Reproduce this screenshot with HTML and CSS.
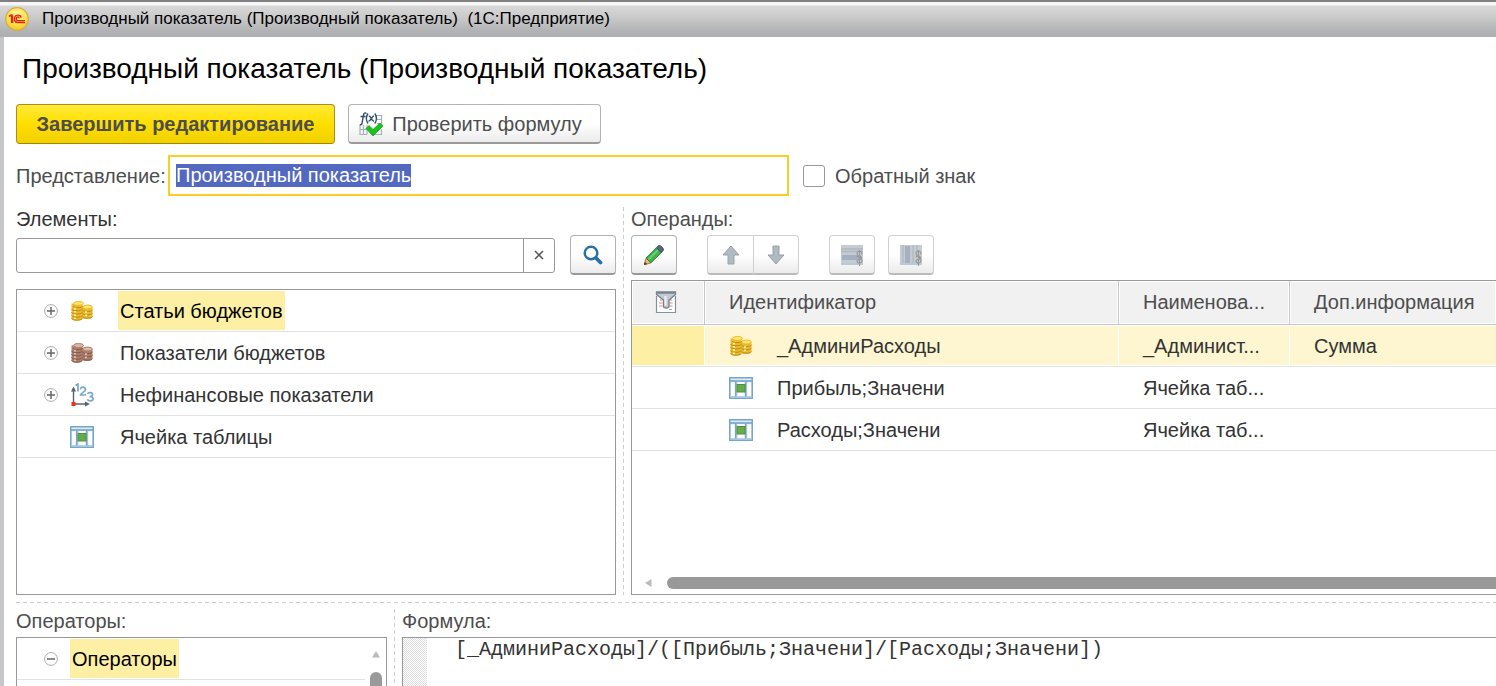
FILE: index.html
```html
<!DOCTYPE html>
<html lang="ru">
<head>
<meta charset="utf-8">
<title>Производный показатель (1С:Предприятие)</title>
<link rel="stylesheet" href="styles.css">
</head>
<body>
<svg class="defs" width="0" height="0" aria-hidden="true">
  <defs>
    <symbol id="coins" viewBox="0 0 24 24">
      <path class="coin-side" d="M1.500 4.500v14.500c0 3.500 11 3.500 11 0v-14.500z"/>
      <path class="coin-side" d="M12 8v10.500c1 2.500 10.500 2 10.500-1V8z"/>
      <ellipse class="coin-top" cx="8.500" cy="4.500" rx="5" ry="2"/>
      <ellipse class="coin-top" cx="17.500" cy="8" rx="4.800" ry="2"/>
      <path class="coin-line" d="M3 7c1 2.200 9 2.200 10 0M1.500 10c1 2.400 9.500 2.400 11 0M1.500 13.200c1 2.400 9.500 2.400 11 0M1.500 16.500c1 2.400 9.500 2.400 11 0M1.500 19.400c1 2.400 9.500 2.400 11 0M12.500 11c1 2 9 2 10 0M12.500 14.200c1 2 9 2 10 0M12.500 17.600c1 2 9 2 10 0"/>
      <path class="coin-shine" d="M5 8.800v1.600M5 12v1.600M5 15.300v1.600M5 18.500v1.400M16 12.300v1.600M16 15.600v1.600"/>
    </symbol>
    <symbol id="cell" viewBox="0 0 24 22">
      <rect x=".75" y=".75" width="22.500" height="20.500" fill="#dcecf8" stroke="#78a6c8" stroke-width="1.500"/>
      <path d="M1 4h22" stroke="#6d9fc4" stroke-width="1.500"/>
      <rect x="2" y="5.500" width="3.500" height="14" fill="#fff"/>
      <rect x="18.500" y="5.500" width="3.500" height="14" fill="#fff"/>
      <rect x="9" y="5" width="6" height="15" fill="#fff"/>
      <path d="M6.800 4.500V20M16.800 4.500V20" stroke="#78a6c8" stroke-width="1.600"/>
      <path d="M1.500 20h21" stroke="#a3c5dc" stroke-width="1.500"/>
      <rect x="8" y="7.500" width="8" height="7.500" fill="#67ad45" stroke="#4e9046"/>
    </symbol>
    <symbol id="plus" viewBox="0 0 14 14">
      <circle cx="7" cy="7" r="6.400" fill="#fff" stroke="#aaa"/>
      <path d="M3 7h8M7 3v8" stroke="#666" stroke-width="1.500"/>
    </symbol>
    <symbol id="minus" viewBox="0 0 14 14">
      <circle cx="7" cy="7" r="6.400" fill="#fff" stroke="#aaa"/>
      <path d="M3 7h8" stroke="#666" stroke-width="1.500"/>
    </symbol>
    <symbol id="clip" viewBox="0 0 8 18">
      <path d="M6.500 5.500C6.500 1 1.500 1 1.500 4.500S6.500 8 6.500 11.500 1.500 14.500 1.500 12M2 8.500C1 6 6 6 6 9S1.500 9 1.500 12.500M4 1v16" fill="none" stroke="#999" stroke-width="1.100"/>
    </symbol>
  </defs>
</svg>

<header class="titlebar">
  <svg class="logo" viewBox="0 0 24 24" aria-hidden="true">
    <defs>
      <radialGradient id="sun" cx=".5" cy=".3" r=".7"><stop offset="0" stop-color="#fff6a0"/><stop offset=".6" stop-color="#ffe24a"/><stop offset="1" stop-color="#f6c61d"/></radialGradient>
    </defs>
    <circle cx="12" cy="12" r="11.300" fill="url(#sun)" stroke="#d0ae4c" stroke-width="1.200"/>
    <path d="M4 9.500l2.200-1.500h.6v8M7.500 8.500V16" fill="none" stroke="#e2231a" stroke-width="1.700"/>
    <path d="M16 10.800c0-3.800-6.500-3.800-6.500 1.200 0 2.200 1.500 3.500 3.200 3.500H20M14.300 11.300c-.2-2-3-1.700-3 .6 0 1.100.7 1.700 1.600 1.700H20" fill="none" stroke="#e2231a" stroke-width="1.400"/>
  </svg>
  <span>Производный показатель (Производный показатель)&nbsp; (1С:Предприятие)</span>
</header>

<main class="window">
  <h1>Производный показатель (Производный показатель)</h1>

  <div class="commands">
    <button class="btn primary" type="button">Завершить редактирование</button>
    <button class="btn check" type="button">
      <svg class="icon-check" viewBox="0 0 24 24" aria-hidden="true">
        <path d="M17 3.500h5.500v8.500M18 7.500h4.500M1 13v9.500h7M1 17.500h7M4.500 13v9.500M8 13v9.500M13 22.500h9.500v-5M18 11.500h4" fill="none" stroke="#a5b1ba" stroke-width="1.200"/>
        <path d="M7.500 1.300C5.500.3 4.800 1.500 4.400 3.500L3 11.500c-.3 1.300-1 1.500-2.200 1M1.500 4.500h5M9 1.500c-2 3-2 7 0 10M15.800 1.500c2 3 2 7 0 10M9.800 4c2.700 0 2.300 5.500 5.200 5M15 4c-2.500 0-3 5.500-5.500 5" fill="none" stroke="#2e536b" stroke-width="1.400"/>
        <path d="M7 16.500l3-3 4 4 7-6.500 3 3-10 10z" fill="#19c319" stroke="#159b1b" stroke-width=".7"/>
      </svg>
      <span>Проверить формулу</span>
    </button>
  </div>

  <div class="props">
    <label class="caption-label" for="caption">Представление:</label>
    <input class="caption" id="caption" type="text" value="Производный показатель">
    <input class="tick" id="inverse" type="checkbox">
    <label for="inverse">Обратный знак</label>
  </div>

  <div class="upper">
    <section class="pane">
      <label class="dark" for="search">Элементы:</label>
      <div class="search-row">
        <div class="search-box">
          <input id="search" type="text">
          <button type="button" aria-label="Очистить"><svg viewBox="0 0 10 10" aria-hidden="true"><path d="M1 1l8 8M9 1L1 9" stroke="#555" stroke-width="1.500"/></svg></button>
        </div>
        <button class="btn square" type="button" aria-label="Найти">
          <svg class="icon-find" viewBox="0 0 20 20" aria-hidden="true"><circle cx="8" cy="8" r="6.300" fill="none" stroke="#2672a8" stroke-width="2.400"/><path d="M13 13l4.500 4.500" stroke="#2672a8" stroke-width="3.800" stroke-linecap="round"/></svg>
        </button>
      </div>
      <ul class="tree box">
        <li><svg class="expander"><use href="#plus"/></svg><svg class="icon gold"><use href="#coins"/></svg><span class="current">Статьи бюджетов</span></li>
        <li><svg class="expander"><use href="#plus"/></svg><svg class="icon bronze"><use href="#coins"/></svg><span>Показатели бюджетов</span></li>
        <li><svg class="expander"><use href="#plus"/></svg>
          <svg class="icon" viewBox="0 0 24 24" aria-hidden="true">
            <path d="M3.500 21V5M3.500 21h13" stroke="#58646b" stroke-width="1.400"/>
            <path d="M1 8.500L3.500 3.500l2.500 5zM15 18.500l5 2.500-5 2.500z" fill="#58646b"/>
            <rect x="1.500" y="19" width="4" height="4" fill="#ed2f22"/>
            <path d="M5.500 2.500L8 1v7.500M10.500 6.500c0-3.500 5-3 5 0 0 2-4.500 3.500-5 5.500h5.500M17.500 11c1-2.200 5.200-1.700 5 .7-.1 1.600-1.500 1.900-3 1.900 2 0 3.700.6 3.600 2.300-.2 2.400-4.600 2.700-5.800.5" fill="none" stroke="#7ba9c9" stroke-width="1.700"/>
          </svg><span>Нефинансовые показатели</span></li>
        <li><span class="expander"></span><svg class="icon"><use href="#cell"/></svg><span>Ячейка таблицы</span></li>
      </ul>
    </section>

    <div class="splitter-v"></div>

    <section class="pane">
      <h2>Операнды:</h2>
      <div class="tools">
        <button class="btn square" type="button" aria-label="Изменить">
          <svg class="icon-pencil" viewBox="0 0 20 20" aria-hidden="true">
            <path d="M0 20l2.200-7 4.800 4.800z" fill="#edbd69" stroke="#866036" stroke-width=".8"/>
            <path d="M0 20l.9-3 2.100 2.100z" fill="#333"/>
            <path d="M2.200 13L12.500 2.700l4.800 4.800L7 17.800z" fill="#3fb54b" stroke="#287b35"/>
            <path d="M4.500 14.500L14 5" stroke="#77d47c" stroke-width="1.500"/>
            <path d="M12.500 2.700l1.700-1.700c1.800-1.800 6.600 3 4.800 4.800l-1.700 1.700z" fill="#5b6685" stroke="#414b64"/>
          </svg>
        </button>
        <div class="pair">
          <button class="btn square faded" type="button" disabled aria-label="Вверх"><svg class="icon-arrow" viewBox="0 0 18 20" aria-hidden="true"><path d="M9 1l8 9h-5v9H6v-9H1z" fill="#afbac1" stroke="#98a3aa"/></svg></button>
          <button class="btn square faded" type="button" disabled aria-label="Вниз"><svg class="icon-arrow" viewBox="0 0 18 20" aria-hidden="true"><path d="M9 19l8-9h-5V1H6v9H1z" fill="#afbac1" stroke="#98a3aa"/></svg></button>
        </div>
        <button class="btn square faded" type="button" disabled aria-label="Строки">
          <svg class="icon" viewBox="0 0 24 24" aria-hidden="true"><rect x="1" y="2" width="22" height="20" fill="#c6cbd0"/><path d="M1 6h22M1 8.500h22" stroke="#aeb8c3" stroke-width="1.300"/><rect x="2" y="12" width="17" height="5" fill="#a5b1c2"/><path d="M1 21h20" stroke="#b5cbd8" stroke-width="2"/><use href="#clip" x="15" y="6" width="9" height="18"/></svg>
        </button>
        <button class="btn square faded" type="button" disabled aria-label="Колонки">
          <svg class="icon" viewBox="0 0 24 24" aria-hidden="true"><rect x="1" y="2" width="22" height="20" fill="#c6cbd0"/><path d="M4 2v18M14 2v18M18 2v10" stroke="#b0bac4" stroke-width="1.300"/><rect x="6" y="3" width="5" height="17" fill="#a5b1c2"/><path d="M1 21h20" stroke="#b5cbd8" stroke-width="2"/><use href="#clip" x="15" y="6" width="9" height="18"/></svg>
        </button>
      </div>
      <div class="grid-box box">
        <table>
          <colgroup><col class="c-flag"><col class="c-id"><col class="c-name"><col></colgroup>
          <thead>
            <tr>
              <th class="flag" aria-label="Отбор">
                <svg class="icon-filter" viewBox="0 0 22 22" aria-hidden="true">
                  <path d="M1.500 5v16.500h19V5" fill="#fff" stroke="#7f929e" stroke-width="1.200"/>
                  <path d="M4 12h3.500M14.500 12h3M5 9h2.500M14.500 9h2.500M4 15h3.500M14.500 15h3" stroke="#e98478" stroke-width="1.200"/>
                  <path d="M14 18.500h3" stroke="#8babc0"/>
                  <path d="M1.500 1h19v2.500L14 9v6.500c0 2-5.500 2-5.500 0V9L1.500 3.500z" fill="#c3cad2" stroke="#72808b" stroke-width="1.300"/>
                  <path d="M2.500 2h17" stroke="#72808b" stroke-width="1.500"/>
                  <path d="M10.500 5v9.500" stroke="#eff2f5" stroke-width="2"/>
                </svg>
              </th>
              <th>Идентификатор</th><th>Наименова...</th><th>Доп.информация</th>
            </tr>
          </thead>
          <tbody>
            <tr class="selected"><td></td><td><div class="with-icon"><svg class="icon gold"><use href="#coins"/></svg>_АдминиРасходы</div></td><td>_Админист...</td><td>Сумма</td></tr>
            <tr><td></td><td><div class="with-icon"><svg class="icon"><use href="#cell"/></svg>Прибыль;Значени</div></td><td>Ячейка таб...</td><td></td></tr>
            <tr><td></td><td><div class="with-icon"><svg class="icon"><use href="#cell"/></svg>Расходы;Значени</div></td><td>Ячейка таб...</td><td></td></tr>
          </tbody>
        </table>
        <div class="hscroll">
          <svg viewBox="0 0 7 8" aria-hidden="true"><path d="M0 4l6.500-4v8z" fill="#bbb"/></svg>
          <div class="hthumb"></div>
        </div>
      </div>
    </section>
  </div>

  <div class="splitter-h"></div>

  <div class="lower">
    <section class="pane">
      <h2>Операторы:</h2>
      <div class="operators box">
        <ul class="tree">
          <li><svg class="expander"><use href="#minus"/></svg><span class="current">Операторы</span></li>
        </ul>
        <div class="vscroll">
          <svg viewBox="0 0 8 7" aria-hidden="true"><path d="M4 0l4 6.500H0z" fill="#bbb"/></svg>
          <div class="vthumb"></div>
        </div>
      </div>
    </section>
    <div class="splitter-v"></div>
    <section class="pane">
      <label for="formula">Формула:</label>
      <div class="editor box">
        <div class="gutter"></div>
        <textarea id="formula" spellcheck="false">[_АдминиРасходы]/([Прибыль;Значени]/[Расходы;Значени])</textarea>
      </div>
    </section>
  </div>
</main>
<script src="main.js"></script>
</body>
</html>
```
FILE: styles.css
```css
* {
  box-sizing: border-box;
}

body {
  margin: 0;
  height: 100vh;
  display: flex;
  flex-direction: column;
  overflow: hidden;
  background: #fff;
  color: #4d4d4d;
  font: 20px/24px "Liberation Sans", Arial, sans-serif;
}

button,
input,
textarea {
  font: inherit;
  color: inherit;
  margin: 0;
  padding: 0;
}

svg {
  display: block;
  flex: none;
}

.defs {
  position: absolute;
}

.titlebar {
  flex: none;
  display: flex;
  align-items: center;
  gap: 13px;
  height: 37px;
  padding: 0 0 2px 5px;
  border-top: 2px solid #808080;
  background: linear-gradient(#f6f6f6 0, #f6f6f6 3px, #d9d9d9 4px, #c9c9ca 16px, #b0b1b3 30px, #acaeb0 100%);
  color: #000;
  font-size: 17px;
}

.logo {
  width: 24px;
  height: 24px;
}

.window {
  flex: 1;
  min-height: 0;
  display: flex;
  flex-direction: column;
  padding: 16px 0 0 12px;
  border-left: 4px solid #c5c6c7;
}

h1 {
  margin: 0 0 19px 6px;
  color: #000;
  font-size: 28px;
  line-height: 32px;
  font-weight: normal;
}

h2 {
  margin: 0 0 4px;
  font-size: 20px;
  line-height: 24px;
  font-weight: normal;
}

.commands {
  display: flex;
  gap: 13px;
  margin-bottom: 11px;
}

.btn {
  display: flex;
  align-items: center;
  justify-content: center;
  height: 40px;
  border: 1px solid #b3b3b3;
  border-bottom: 2px solid #9a9a9a;
  border-radius: 4px;
  background: linear-gradient(#fff 50%, #ebebeb);
}

.primary {
  min-width: 319px;
  padding: 0 19px;
  border: 1px solid #a88f1a;
  border-bottom-color: #a08500;
  background: linear-gradient(#ffe936, #ffdf00 50%, #f0d000);
  font-weight: bold;
}

.check {
  gap: 9px;
  min-width: 253px;
  padding: 0 18px 0 10px;
}

.icon-check,
.icon {
  width: 24px;
  height: 24px;
}

.square {
  width: 46px;
}

.faded {
  border-color: #d0d0d0;
  border-bottom-color: #bbb;
}

.props {
  display: flex;
  align-items: center;
  margin-bottom: 11px;
}

.caption-label {
  width: 152px;
}

.caption {
  width: 621px;
  height: 41px;
  margin-right: 14px;
  padding: 0 6px;
  border: 2px solid #fccd23;
  outline: none;
  background: #fff;
}

.caption::selection {
  background: #5268c1;
  color: #fff;
}

.tick {
  appearance: none;
  width: 22px;
  height: 22px;
  margin-right: 10px;
  border: 1px solid #999;
  border-radius: 3px;
  background: #fff;
}

.upper,
.lower {
  display: grid;
  grid-template-rows: minmax(0, 1fr);
}

.upper {
  flex: 1;
  min-height: 0;
  grid-template-columns: 600px 15px minmax(0, 1fr);
}

.lower {
  flex: none;
  height: 77px;
  grid-template-columns: 371px 15px minmax(0, 1fr);
}

.pane {
  display: flex;
  flex-direction: column;
  min-width: 0;
  min-height: 0;
}

.pane > label {
  margin-bottom: 4px;
}

.dark {
  color: #333;
}

.splitter-v {
  width: 1px;
  margin-left: 7px;
  background: repeating-linear-gradient(#d0d0d0 0 4px, transparent 4px 7px);
}

.splitter-h {
  flex: none;
  height: 1px;
  margin: 7px 0 6px;
  background: repeating-linear-gradient(90deg, #d0d0d0 0 4px, transparent 4px 7px);
}

.box {
  border: 1px solid #999;
}

.search-row {
  display: flex;
  align-items: center;
  gap: 15px;
  margin-bottom: 14px;
}

.search-box {
  flex: 1;
  display: flex;
  height: 35px;
  border: 1px solid #999;
  border-radius: 3px;
}

.search-box input {
  flex: 1;
  min-width: 0;
  padding: 0 6px;
  border: 0;
  outline: none;
  background: none;
}

.search-box button {
  display: flex;
  align-items: center;
  justify-content: center;
  width: 31px;
  border: 0;
  border-left: 1px solid #999;
  background: none;
}

.search-box svg {
  width: 10px;
  height: 10px;
}

.icon-find {
  width: 20px;
  height: 20px;
}

.tree {
  flex: 1;
  min-height: 0;
  margin: 0;
  padding: 0;
  list-style: none;
  color: #333;
}

.tree li {
  display: flex;
  align-items: center;
  height: 42px;
  padding-left: 27px;
  border-bottom: 1px solid #e2e2e2;
}

.tree li > span:last-child {
  margin-left: 24px;
  padding: 1px 2px 0;
  line-height: 38px;
}

.tree .expander {
  width: 14px;
  height: 14px;
  margin-right: 12px;
}

.tree .expander + span:last-child {
  margin-left: 0;
}

.tree li > .current {
  background: #fdf0a5;
  color: #000;
}

.gold {
  --side: #ebba2e;
  --top: #ffe76c;
  --line: #bd8a18;
  --shine: #fff3a0;
}

.bronze {
  --side: #ad7f6c;
  --top: #d9b9a9;
  --line: #7f5648;
  --shine: #dcbbab;
}

.coin-side {
  fill: var(--side);
}

.coin-top {
  fill: var(--top);
  stroke: var(--side);
}

.coin-line {
  fill: none;
  stroke: var(--line);
}

.coin-shine {
  fill: none;
  stroke: var(--shine);
  stroke-width: 2;
}

.tools {
  display: flex;
  margin-bottom: 5px;
}

.pair {
  display: flex;
  margin: 0 30px;
}

.pair .btn:first-child {
  border-right: 0;
  border-radius: 4px 0 0 4px;
}

.pair .btn:last-child {
  border-radius: 0 4px 4px 0;
}

.tools > .faded + .faded {
  margin-left: 13px;
}

.icon-pencil {
  width: 20px;
  height: 20px;
}

.icon-arrow {
  width: 18px;
  height: 20px;
}

.grid-box {
  flex: 1;
  min-height: 0;
  display: flex;
  flex-direction: column;
  justify-content: space-between;
  border-right: 0;
}

table {
  width: 100%;
  table-layout: fixed;
  border-collapse: separate;
  border-spacing: 0;
  color: #333;
}

.c-flag {
  width: 73px;
}

.c-id {
  width: 414px;
}

.c-name {
  width: 171px;
}

th,
td {
  height: 42px;
  padding: 0 0 0 24px;
  border-bottom: 1px solid #e2e2e2;
  text-align: left;
  font-weight: normal;
  white-space: nowrap;
}

th {
  height: 44px;
  padding-bottom: 2px;
  border-right: 1px solid #c6c6c6;
  border-bottom-color: #c6c6c6;
  background: #f1f1f1;
  box-shadow: inset 0 0 0 1px #fff;
  color: #4d4d4d;
}

th:last-child {
  border-right: 0;
}

.flag {
  padding-left: 23px;
}

.icon-filter {
  width: 22px;
  height: 22px;
}

.selected td {
  border-right: 1px solid #fff;
  background: #fdf6d1;
  box-shadow: inset 0 1px #fff, inset 0 -1px #fff;
}

.selected td:first-child {
  background: #fdf0a5;
}

.selected td:last-child {
  border-right: 0;
}

.with-icon {
  display: flex;
  align-items: center;
  gap: 24px;
}

.hscroll {
  display: flex;
  align-items: center;
  gap: 15px;
  padding: 0 0 5px 13px;
}

.hscroll svg {
  width: 7px;
  height: 8px;
}

.hthumb {
  flex: 1;
  height: 12px;
  border-radius: 6px 0 0 6px;
  background: #999;
}

.operators {
  flex: 1;
  min-height: 0;
  display: flex;
  border-bottom: 0;
  overflow: hidden;
}

.vscroll {
  flex: none;
  display: flex;
  flex-direction: column;
  align-items: center;
  gap: 14px;
  width: 21px;
  padding-top: 13px;
}

.vscroll svg {
  width: 8px;
  height: 7px;
}

.vthumb {
  flex: 1;
  width: 12px;
  border-radius: 6px 6px 0 0;
  background: #999;
}

.editor {
  flex: 1;
  min-height: 0;
  display: flex;
  border-right: 0;
  border-bottom: 0;
}

.gutter {
  width: 24px;
  background: repeating-conic-gradient(#dedede 0 25%, #fff 0 50%) 0 0 / 2px 2px;
}

.editor textarea {
  flex: 1;
  min-width: 0;
  padding: 0 0 0 28px;
  border: 0;
  outline: none;
  resize: none;
  overflow: hidden;
  background: #fff;
  color: #333;
  font: 20px/24px "Liberation Mono", "Courier New", monospace;
}
```
FILE: main.js
```js
const caption = document.getElementById("caption");
caption.focus();
caption.select();
```
